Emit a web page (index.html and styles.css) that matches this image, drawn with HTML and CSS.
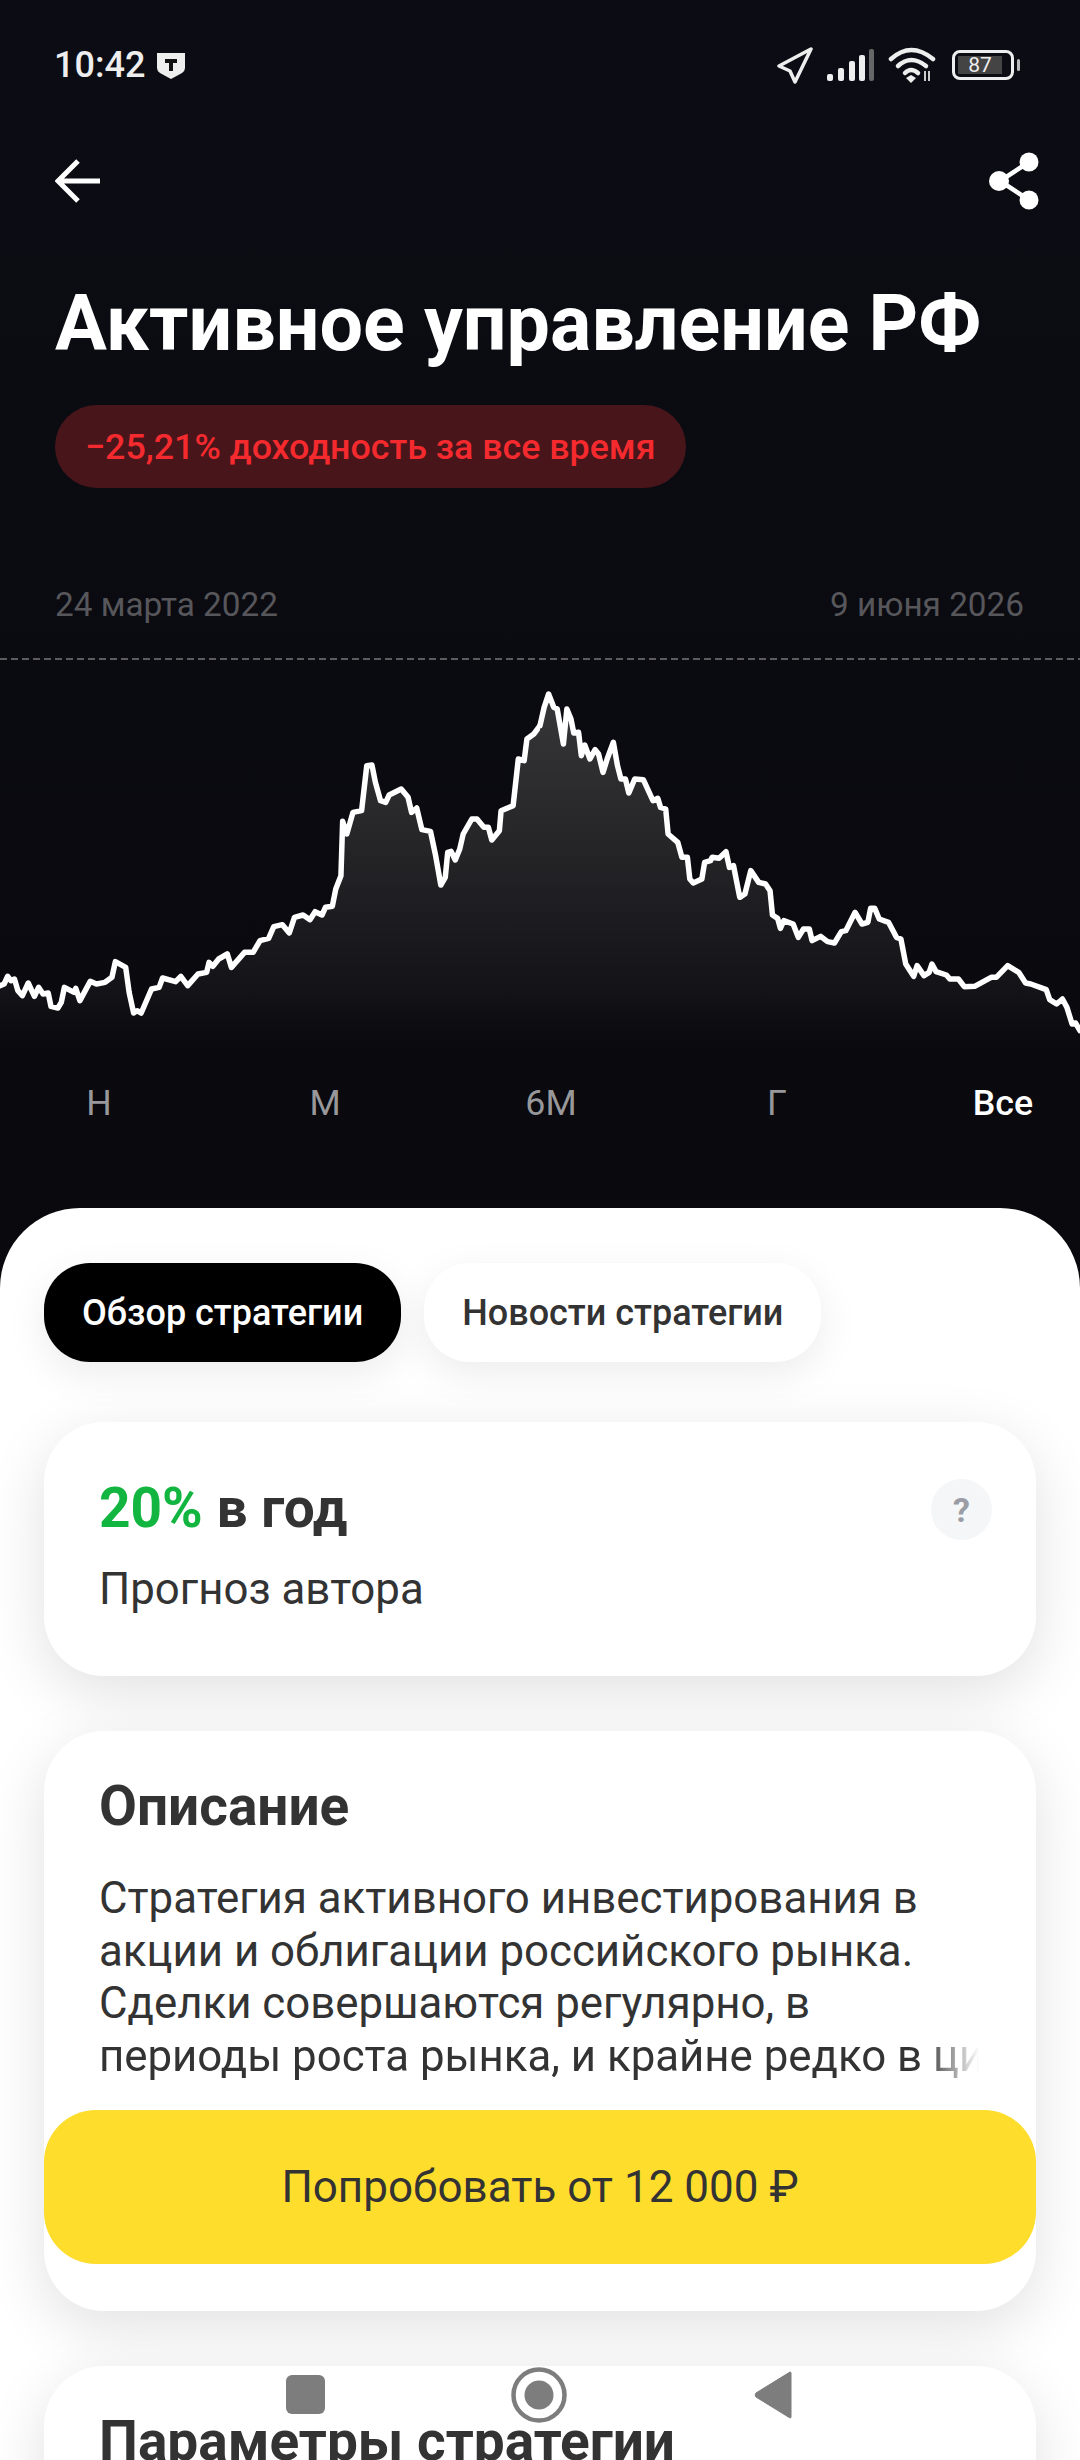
FILE: index.html
```html
<!DOCTYPE html>
<html lang="ru">
<head>
<meta charset="UTF-8">
<meta name="viewport" content="width=device-width, initial-scale=1.0">
<title>Активное управление РФ</title>
<link rel="stylesheet" href="styles.css">
</head>
<body>

<div class="screen">
    <div class="hero">
        <div class="status-bar">
            <div class="status-left">
                <span class="status-time">10:42</span>
                <svg class="status-shield" width="28" height="27" viewBox="0 0 28 27">
                    <path d="M0 1h28v15q0 3-3 5l-11 6-11-6q-3-2-3-5z" fill="#eee"/>
                    <path d="M8 7h12v4h-4v8h-4v-8H8z" fill="#111"/>
                </svg>
            </div>
            <div class="status-right">
                <svg width="38" height="38" viewBox="0 0 38 38">
                    <path d="M35 3 3 20l11 5 5 11z" fill="none" stroke="#eee" stroke-width="3.5" stroke-linejoin="round"/>
                </svg>
                <svg width="48" height="32" viewBox="0 0 48 32">
                    <g fill="#eee">
                        <rect x="0" y="25" width="6" height="7" rx="2"/>
                        <rect x="11" y="19" width="6" height="13" rx="2"/>
                        <rect x="22" y="12" width="6" height="20" rx="2"/>
                        <rect x="32" y="6" width="6" height="26" rx="2"/>
                    </g>
                    <rect x="42" y="0" width="5" height="32" rx="2" fill="#666"/>
                </svg>
                <svg class="status-wifi" width="48" height="36" viewBox="0 0 48 36">
                    <g fill="none" stroke="#eee" stroke-width="4.5" stroke-linecap="round">
                        <path d="M3 12Q23-6 45 12"/>
                        <path d="M10 19Q23 7 38 19"/>
                        <path d="M17 26Q23 20 30 26"/>
                    </g>
                    <path d="M23 36l-5-5 5-3 5 3z" fill="#eee"/>
                    <path d="M37 24v10M41 24v10" stroke="#ccc" stroke-width="2"/>
                </svg>
                <div class="battery">
                    <div class="battery-body"><span class="battery-level">87</span></div>
                    <div class="battery-nub"></div>
                </div>
            </div>
        </div>

        <div class="top-nav">
            <svg width="46" height="44" viewBox="0 0 46 44">
                <path d="M45 22H4M23 2 3 22l20 20" fill="none" stroke="#fff" stroke-width="5"/>
            </svg>
            <svg width="50" height="58" viewBox="0 0 50 58">
                <path d="M40 10 11 29l29 19" fill="none" stroke="#fff" stroke-width="4.5"/>
                <circle cx="40" cy="10" r="9.5" fill="#fff"/>
                <circle cx="10" cy="29" r="10" fill="#fff"/>
                <circle cx="40" cy="48" r="9.5" fill="#fff"/>
            </svg>
        </div>

        <h1 class="title">Активное управление РФ</h1>
        <div class="yield-pill">−25,21% доходность за все время</div>

        <div class="dates">
            <span>24 марта 2022</span>
            <span>9 июня 2026</span>
        </div>
        <div class="dash-line"></div>

        <svg class="chart" viewBox="0 0 3136 1260" preserveAspectRatio="none">
            <defs>
                <linearGradient id="area" gradientUnits="userSpaceOnUse" x1="0" y1="100" x2="0" y2="1240">
                    <stop offset="0" stop-color="#37373a"/>
                    <stop offset="0.45" stop-color="#232326"/>
                    <stop offset="0.8" stop-color="#131317"/>
                    <stop offset="1" stop-color="#08080c" stop-opacity="0"/>
                </linearGradient>
            </defs>
            <path class="chart-area" d="M0 1260V980L12 975 22 952 32 965 42 960 52 995 65 1010 82 972 100 1012 112 985 125 1005 140 1002 148 1042 168 1047 178 1030 187 985 215 1000 220 988 232 1025 262 967 280 975 305 970 325 955 335 908 365 925 375 1000 388 1062 398 1055 410 1062 440 990 462 985 472 957 510 968 525 952 545 980 575 945 600 940 607 910 618 922 635 900 660 885 672 925 710 880 735 880 755 845 780 838 795 803 820 797 840 822 855 775 880 768 900 782 915 758 935 768 945 745 965 742 975 690 990 650 995 487 1007 525 1025 460 1050 455 1065 320 1080 318 1090 370 1105 425 1120 430 1130 408 1165 390 1185 415 1195 460 1210 447 1225 512 1250 517 1265 590 1280 678 1293 655 1300 580 1310 577 1322 603 1335 570 1345 525 1370 480 1385 480 1405 505 1418 505 1428 543 1450 515 1455 455 1490 440 1505 300 1522 305 1530 240 1550 225 1568 200V1260Z"/>
            <path class="chart-line" d="M0 980L12 975 22 952 32 965 42 960 52 995 65 1010 82 972 100 1012 112 985 125 1005 140 1002 148 1042 168 1047 178 1030 187 985 215 1000 220 988 232 1025 262 967 280 975 305 970 325 955 335 908 365 925 375 1000 388 1062 398 1055 410 1062 440 990 462 985 472 957 510 968 525 952 545 980 575 945 600 940 607 910 618 922 635 900 660 885 672 925 710 880 735 880 755 845 780 838 795 803 820 797 840 822 855 775 880 768 900 782 915 758 935 768 945 745 965 742 975 690 990 650 995 487 1007 525 1025 460 1050 455 1065 320 1080 318 1090 370 1105 425 1120 430 1130 408 1165 390 1185 415 1195 460 1210 447 1225 512 1250 517 1265 590 1280 678 1293 655 1300 580 1310 577 1322 603 1335 570 1345 525 1370 480 1385 480 1405 505 1418 505 1428 543 1450 515 1455 455 1490 440 1505 300 1522 305 1530 240 1550 225 1568 200"/>
            <g transform="translate(1568 0)">
                <path class="chart-area" d="M0 1260V200L12 145 25 105 40 145 50 150 68 255 78 150 90 180 98 222 112 220 120 290 130 258 145 300 160 272 170 285 183 340 195 300 213 250 225 320 235 360 248 360 258 402 275 360 300 362 328 425 342 418 350 445 365 450 372 525 400 550 412 595 428 595 435 660 445 672 470 660 478 610 495 605 500 595 520 598 540 578 550 625 562 620 580 715 595 705 612 635 635 670 655 675 668 695 675 768 690 778 698 808 708 785 735 795 750 835 765 810 782 810 790 845 815 832 835 848 855 852 875 818 888 815 915 760 935 795 952 790 960 748 972 748 985 780 1012 790 1035 835 1048 840 1062 915 1085 952 1095 920 1115 950 1130 940 1138 915 1150 938 1180 948 1190 960 1215 960 1232 983 1262 982 1310 955 1325 955 1358 920 1390 940 1410 972 1425 975 1470 992 1480 1022 1500 1035 1517 1020 1530 1045 1545 1095 1555 1092 1568 1115V1260Z"/>
                <path class="chart-line" d="M0 200L12 145 25 105 40 145 50 150 68 255 78 150 90 180 98 222 112 220 120 290 130 258 145 300 160 272 170 285 183 340 195 300 213 250 225 320 235 360 248 360 258 402 275 360 300 362 328 425 342 418 350 445 365 450 372 525 400 550 412 595 428 595 435 660 445 672 470 660 478 610 495 605 500 595 520 598 540 578 550 625 562 620 580 715 595 705 612 635 635 670 655 675 668 695 675 768 690 778 698 808 708 785 735 795 750 835 765 810 782 810 790 845 815 832 835 848 855 852 875 818 888 815 915 760 935 795 952 790 960 748 972 748 985 780 1012 790 1035 835 1048 840 1062 915 1085 952 1095 920 1115 950 1130 940 1138 915 1150 938 1180 948 1190 960 1215 960 1232 983 1262 982 1310 955 1325 955 1358 920 1390 940 1410 972 1425 975 1470 992 1480 1022 1500 1035 1517 1020 1530 1045 1545 1095 1555 1092 1568 1115"/>
            </g>
        </svg>

        <div class="periods">
            <span>Н</span>
            <span>М</span>
            <span>6М</span>
            <span>Г</span>
            <span class="period-active">Все</span>
        </div>
    </div>

    <div class="sheet">
        <div class="tabs">
            <div class="tab tab-active">Обзор стратегии</div>
            <div class="tab">Новости стратегии</div>
        </div>

        <div class="card card-forecast">
            <div>
                <div class="forecast-value"><span class="forecast-percent">20%</span> в год</div>
                <div class="forecast-label">Прогноз автора</div>
            </div>
            <div class="help-btn">?</div>
        </div>

        <div class="card card-description">
            <h3 class="card-title">Описание</h3>
            <div class="description-text">
                <div>Стратегия активного инвестирования в</div>
                <div>акции и облигации российского рынка.</div>
                <div>Сделки совершаются регулярно, в</div>
                <div class="description-fade">периоды роста рынка, и крайне редко в циклы снижения</div>
            </div>
        </div>

        <div class="card card-params">
            <h3 class="card-title">Параметры стратегии</h3>
        </div>
    </div>

    <div class="try-btn">Попробовать от 12 000 ₽</div>

    <svg class="nav-buttons" width="520" height="60" viewBox="0 0 520 60">
        <rect x="1" y="8" width="39" height="39" rx="6" fill="#7d7d7d"/>
        <circle cx="254" cy="28" r="25.5" fill="none" stroke="#7d7d7d" stroke-width="4.5"/>
        <circle cx="254" cy="28" r="14.5" fill="#7d7d7d"/>
        <path d="M505 5a1 1 0 0 1 1 1v44a1 1 0 0 1-1 1L471 30a3 3 0 0 1 0-4z" fill="#7d7d7d" stroke="#7d7d7d" stroke-width="1" stroke-linejoin="round"/>
    </svg>
</div>

</body>
</html>
```

FILE: styles.css
```css
* {
    box-sizing: border-box;
}
body {
    margin: 0;
    font-family: Roboto, "Noto Sans", sans-serif;
    background-color: #fff;
}
.screen {
    position: relative;
    width: 1080px;
    height: 2460px;
    overflow: hidden;
    background-color: #09090e;
}
.hero {
    height: 1208px;
    background: linear-gradient(180deg, #0c0d14 0%, #09090e 100%);
}
.status-bar {
    display: flex;
    justify-content: space-between;
    align-items: center;
    height: 130px;
    padding: 0 60px 0 54px;
}
.status-left, .status-right {
    display: flex;
    align-items: center;
}
.status-left {
    gap: 12px;
}
.status-right {
    gap: 13px;
}
.status-time {
    color: #eee;
    font-size: 36px;
    font-weight: 500;
}
.battery {
    display: flex;
    align-items: center;
    gap: 3px;
    margin-left: 3px;
}
.battery-body {
    width: 62px;
    height: 30px;
    padding: 3px;
    border: 3px solid #eee;
    border-radius: 8px;
}
.battery-level {
    display: block;
    width: 44px;
    height: 18px;
    background-color: #444;
    color: #eee;
    font-size: 21px;
    line-height: 18px;
    text-align: center;
}
.battery-nub {
    width: 3px;
    height: 12px;
    border-radius: 2px;
    background-color: #bbb;
}
.top-nav {
    display: flex;
    justify-content: space-between;
    align-items: center;
    height: 62px;
    margin-top: 20px;
    padding: 0 41px 0 55px;
}
.title {
    margin: 70px 0 0 55px;
    color: #fff;
    font-size: 77.2px;
    font-weight: 700;
    line-height: 84px;
    white-space: nowrap;
}
.yield-pill {
    display: inline-flex;
    align-items: center;
    height: 83px;
    margin: 39px 0 0 55px;
    padding: 0 31px 0 30px;
    border-radius: 42px;
    background-color: #47151a;
    color: #f52a2e;
    font-size: 35.75px;
    font-weight: 500;
}
.dates {
    display: flex;
    justify-content: space-between;
    margin-top: 95px;
    padding: 0 56px 0 55px;
    color: #57575b;
    font-size: 33.3px;
    line-height: 44px;
}
.dash-line {
    height: 2px;
    margin-top: 31px;
    background: repeating-linear-gradient(90deg, #5c5c5f 0 7px, transparent 7px 11px);
}
.chart {
    display: block;
    width: 1080px;
    height: 420px;
    margin-top: -1px;
}
.chart-area {
    fill: url(#area);
}
.chart-line {
    fill: none;
    stroke: #fff;
    stroke-width: 5.5px;
    stroke-linejoin: round;
    stroke-linecap: round;
    vector-effect: non-scaling-stroke;
}
.periods {
    display: grid;
    grid-template-columns: repeat(5, 226px);
    margin: 4px 0 0 -14px;
    color: #98989b;
    font-size: 35.75px;
    line-height: 40px;
    text-align: center;
}
.period-active {
    color: #fff;
    font-weight: 500;
}
.sheet {
    display: flex;
    flex-direction: column;
    padding: 55px 44px 0;
    border-radius: 80px 80px 0 0;
    background-color: #fff;
}
.tabs {
    display: flex;
    flex: none;
    gap: 23px;
}
.tab {
    display: flex;
    align-items: center;
    height: 99px;
    padding: 0 38px;
    border-radius: 46px;
    background-color: #fff;
    box-shadow: 0 12px 40px rgba(0, 0, 0, 0.08);
    color: #333;
    font-size: 36px;
    font-weight: 500;
}
.tab-active {
    background-color: #000;
    color: #fff;
}
.card {
    flex: none;
    border-radius: 60px;
    background-color: #fff;
    box-shadow: 0 16px 60px rgba(0, 0, 0, 0.12);
}
.card-forecast {
    display: flex;
    justify-content: space-between;
    height: 254px;
    margin-top: 60px;
    padding: 54px 44px 0 55px;
}
.forecast-value {
    color: #333;
    font-size: 55px;
    font-weight: 700;
    line-height: 64px;
}
.forecast-percent {
    color: #12b53f;
}
.forecast-label {
    margin-top: 24px;
    color: #333;
    font-size: 43.8px;
    line-height: 50px;
}
.help-btn {
    display: flex;
    justify-content: center;
    align-items: center;
    width: 61px;
    height: 61px;
    margin-top: 3px;
    border-radius: 50%;
    background-color: #f5f6f7;
    color: #9a9da5;
    font-size: 34px;
    font-weight: 700;
}
.card-description {
    height: 580px;
    margin-top: 55px;
    padding: 0 55px;
}
.card-title {
    margin: 0;
    padding-top: 43px;
    color: #333;
    font-size: 55px;
    font-weight: 700;
    line-height: 64px;
    white-space: nowrap;
}
.description-text {
    margin-top: 34px;
    color: #333;
    font-size: 43.8px;
    line-height: 52.5px;
    white-space: nowrap;
}
.description-fade {
    overflow: hidden;
    -webkit-mask-image: linear-gradient(90deg, #000 825px, transparent 880px);
    mask-image: linear-gradient(90deg, #000 825px, transparent 880px);
}
.card-params {
    height: 300px;
    margin-top: 55px;
    padding: 0 55px;
}
.try-btn {
    position: absolute;
    left: 44px;
    top: 2110px;
    display: flex;
    justify-content: center;
    align-items: center;
    width: 992px;
    height: 154px;
    border-radius: 52px;
    background-color: #ffdd2d;
    color: #333;
    font-size: 44px;
}
.nav-buttons {
    position: absolute;
    left: 285px;
    top: 2367px;
}
```
